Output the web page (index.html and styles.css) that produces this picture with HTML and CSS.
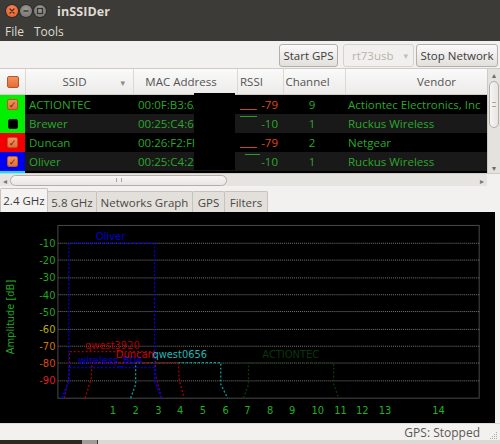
FILE: index.html
```html
<!DOCTYPE html>
<html>
<head>
<meta charset="utf-8">
<title>inSSIDer</title>
<link rel="stylesheet" href="styles.css">
</head>
<body>
<div class="window">
  <div class="titlebar">
    <div class="wbtns">
      <span class="wb close"><svg width="12" height="12" viewBox="0 0 12 12"><path d="M4 4 L8 8 M8 4 L4 8" stroke="#5a2410" stroke-width="1.4" stroke-linecap="round"/></svg></span>
      <span class="wb"><svg width="12" height="12" viewBox="0 0 12 12"><path d="M3.5 6 H8.5" stroke="#33322e" stroke-width="1.4"/></svg></span>
      <span class="wb"><svg width="12" height="12" viewBox="0 0 12 12"><rect x="3.5" y="3.5" width="5" height="5" fill="none" stroke="#33322e" stroke-width="1.2"/></svg></span>
    </div>
    <span class="title">inSSIDer</span>
  </div>
  <div class="menubar"><span>File</span><span>Tools</span></div>
  <div class="toolbar">
    <div class="btn w-gps">Start GPS</div>
    <div class="combo">rt73usb <span class="carrow">▾</span></div>
    <div class="btn w-stop">Stop Network</div>
  </div>
  <div class="tablearea">
    <div class="table">
      <div class="row head">
        <div class="c chk"><span class="cb orange"></span></div>
        <div class="c ssid hc">SSID <span class="sort">▾</span></div>
        <div class="c mac hc">MAC Address</div>
        <div class="c rssi hc">RSSI</div>
        <div class="c chan hc">Channel</div>
        <div class="c vend hc">Vendor</div>
      </div>
      <div class="row r-dark">
        <div class="c chk green"><span class="cb orange checked">✓</span></div>
        <div class="c ssid">ACTIONTEC</div>
        <div class="c mac">00:0F:B3:6A</div>
        <div class="c rssi bad spark-low">-79</div>
        <div class="c chan">9</div>
        <div class="c vend">Actiontec Electronics, Inc</div>
      </div>
      <div class="row r-grey">
        <div class="c chk green"><span class="cb black"></span></div>
        <div class="c ssid">Brewer</div>
        <div class="c mac">00:25:C4:6</div>
        <div class="c rssi spark-high">-10</div>
        <div class="c chan">1</div>
        <div class="c vend">Ruckus Wireless</div>
      </div>
      <div class="row r-dark">
        <div class="c chk red"><span class="cb orange checked">✓</span></div>
        <div class="c ssid">Duncan</div>
        <div class="c mac">00:26:F2:FE</div>
        <div class="c rssi bad spark-low">-79</div>
        <div class="c chan">2</div>
        <div class="c vend">Netgear</div>
      </div>
      <div class="row r-grey">
        <div class="c chk blue"><span class="cb orange checked">✓</span></div>
        <div class="c ssid">Oliver</div>
        <div class="c mac">00:25:C4:2</div>
        <div class="c rssi spark-high2">-10</div>
        <div class="c chan">1</div>
        <div class="c vend">Ruckus Wireless</div>
      </div>
      <div class="row r-part">
        <div class="c chk cyan"></div>
        <div class="c ssid"></div>
        <div class="c mac"></div>
        <div class="c rssi"></div>
        <div class="c chan"></div>
        <div class="c vend"></div>
      </div>
      <div class="redact"></div>
    </div>
    <div class="vscroll">
      <span class="sarrow">▴</span>
      <div class="vslider"><span class="vgrip"></span></div>
      <div class="vspace"></div>
      <span class="sarrow">▾</span>
    </div>
  </div>
  <div class="hscroll">
    <span class="harrow">◂</span>
    <div class="hslider"><span class="hgrip"></span></div>
    <div class="hspace"></div>
    <span class="harrow">▸</span>
    <div class="corner"></div>
  </div>
  <div class="tabs">
    <div class="tab active t1">2.4 GHz</div>
    <div class="tab t2">5.8 GHz</div>
    <div class="tab t3">Networks Graph</div>
    <div class="tab t4">GPS</div>
    <div class="tab t5">Filters</div>
  </div>
  <div class="graph">
    <svg class="plot" width="500" height="211" viewBox="0 212 500 211">
      <rect x="58.5" y="224.5" width="425.5" height="174.5" fill="none" stroke="#4a4a4a" stroke-width="1"/>
      <g class="grid" stroke="#7a7a7a" stroke-width="1" stroke-dasharray="1 1">
        <line x1="59" y1="242.5" x2="484" y2="242.5"/>
        <line x1="59" y1="259.5" x2="484" y2="259.5"/>
        <line x1="59" y1="277.5" x2="484" y2="277.5"/>
        <line x1="59" y1="294.5" x2="484" y2="294.5"/>
        <line x1="59" y1="311.5" x2="484" y2="311.5"/>
        <line x1="59" y1="329.5" x2="484" y2="329.5"/>
        <line x1="59" y1="346.5" x2="484" y2="346.5"/>
        <line x1="59" y1="363.5" x2="484" y2="363.5"/>
        <line x1="59" y1="381.5" x2="484" y2="381.5"/>
      </g>
      <g class="ylab" text-anchor="end">
        <text x="56" y="246.5" fill="#22a822">-10</text>
        <text x="56" y="263.8" fill="#22a822">-20</text>
        <text x="56" y="281.1" fill="#22a822">-30</text>
        <text x="56" y="298.4" fill="#22a822">-40</text>
        <text x="56" y="315.7" fill="#22a822">-50</text>
        <text x="56" y="333" fill="#b8b000">-60</text>
        <text x="56" y="350.3" fill="#cc7800">-70</text>
        <text x="56" y="367.6" fill="#dd4a10">-80</text>
        <text x="56" y="384.9" fill="#dd2020">-90</text>
      </g>
      <text class="axis" transform="translate(14.5 317) rotate(-90)" text-anchor="middle" fill="#22a822">Amplitude [dB]</text>
      <g class="xlab" text-anchor="middle" fill="#22b022">
        <text x="114" y="415">1</text>
        <text x="137" y="415">2</text>
        <text x="160" y="415">3</text>
        <text x="182" y="415">4</text>
        <text x="205" y="415">5</text>
        <text x="228" y="415">6</text>
        <text x="250" y="415">7</text>
        <text x="273" y="415">8</text>
        <text x="295" y="415">9</text>
        <text x="321" y="415">10</text>
        <text x="344" y="415">11</text>
        <text x="366" y="415">12</text>
        <text x="389" y="415">13</text>
        <text x="443" y="415">14</text>
      </g>
      <g fill="none" stroke-width="1.3" stroke-dasharray="2 2">
        <polyline stroke="#0b3a0b" points="246,399 251,385 251,363 337,363 337,385 342,399"/>
        <polyline stroke="#00a0a0" points="132,399 137,385 137,363 223,363 223,385 230,399"/>
        <polyline stroke="#b00000" points="86,399 92,380 93,363 180,363 181,380 186,399"/>
        <polyline stroke="#a00000" points="65,399 70,375 70,352 157,352 157,375 163,399"/>
        <polyline stroke="#0000c8" points="64,399 70,380 70,368 157,368 157,380 163,399"/>
        <polyline stroke="#0000d8" points="62,399 69.5,382 69.5,242.5 156,242.5 156,382 163,399"/>
      </g>
      <g class="nlab">
        <text x="97" y="239" fill="#0000d0">Oliver</text>
        <text x="86" y="349" fill="#b00000">qwest3920</text>
        <text x="265" y="358" fill="#0a360a">ACTIONTEC</text>
        <text x="79" y="364" fill="#0000d8">wireless_B04</text>
        <text x="117" y="358" fill="#d00000">Duncan</text>
        <text x="154" y="358" fill="#22b8b8">qwest0656</text>
      </g>
    </svg>
  </div>
  <div class="status">
    <span class="gps">GPS: Stopped</span>
    <svg class="grip" width="10" height="10" viewBox="0 0 10 10">
      <g fill="#b0aca6"><rect x="8" y="2" width="1" height="1"/><rect x="6" y="4" width="1" height="1"/><rect x="8" y="4" width="1" height="1"/><rect x="4" y="6" width="1" height="1"/><rect x="6" y="6" width="1" height="1"/><rect x="8" y="6" width="1" height="1"/><rect x="2" y="8" width="1" height="1"/><rect x="4" y="8" width="1" height="1"/><rect x="6" y="8" width="1" height="1"/><rect x="8" y="8" width="1" height="1"/></g>
    </svg>
  </div>
  <div class="desktop"><span class="d1"></span><span class="d2"></span><span class="d3"></span></div>
</div>
</body>
</html>
```
FILE: styles.css
```css
* { box-sizing: border-box; }
html, body { margin: 0; padding: 0; background: #3c3b37; }
body { width: 500px; height: 444px; overflow: hidden; font-family: "Open Sans", "Noto Sans", "DejaVu Sans", sans-serif; font-size: 11.5px; }
.window { width: 500px; height: 444px; display: flex; flex-direction: column; background: #f2f1f0; }

.titlebar { height: 22px; background: #3c3b37; display: flex; align-items: center; padding-left: 6px; }
.wbtns { display: flex; gap: 2px; width: 51px; }
.wb { width: 12px; height: 12px; border-radius: 50%; background: radial-gradient(circle at 50% 35%, #9c9a94, #6f6d67); display: flex; align-items: center; justify-content: center; box-shadow: 0 0 0 1px #2e2d2a; }
.wb.close { background: radial-gradient(circle at 50% 35%, #f58a5a, #df5a22); }
.title { color: #dfdbd2; font-weight: bold; font-size: 12.5px; letter-spacing: 0.1px; }

.menubar { height: 19px; background: #3c3b37; display: flex; align-items: center; gap: 10px; padding-left: 5px; color: #dfdbd2; font-size: 12px; padding-bottom: 1px; }

.toolbar { height: 27px; display: flex; justify-content: flex-end; align-items: center; padding-right: 2px; padding-top: 2px; background: #f2f1f0; }
.btn, .combo { height: 23px; border-radius: 3px; display: flex; align-items: center; justify-content: center; color: #3c3c3c; }
.btn { border: 1px solid #b4afa8; background: linear-gradient(#fbfafa, #e2e0dc); }
.w-gps { width: 59px; margin-right: 5px; }
.w-stop { width: 82px; margin-left: 2px; }
.combo { width: 71px; border: 1px solid #d6d2cc; background: #f1f0ee; color: #b7b3ab; justify-content: flex-start; padding-left: 8px; }
.carrow { margin-left: 10px; font-size: 9px; color: #c2beb7; }

.tablearea { height: 105px; display: flex; border-top: 1px solid #cfcbc5; }
.table { position: relative; width: 487px; overflow: hidden; background: #000; }
.row { display: grid; grid-template-columns: 25px 108px 104px 46px 62px 142px; height: 19px; color: #2aa82a; }
.row.head { height: 26px; background: linear-gradient(#fafafa, #ecebea); color: #555350; border-bottom: 1px solid #d0ccc6; }
.row.r-dark { background: #000; }
.row.r-grey { background: #191919; }
.row.r-part { height: 2px; background: #000; }
.c { display: flex; align-items: center; white-space: nowrap; overflow: hidden; }
.hc { justify-content: center; border-left: 1px solid #dcd9d4; }
.row.head .chk { justify-content: center; }
.row.head .ssid { position: relative; padding-right: 14px; }
.sort { position: absolute; right: 8px; top: 7px; color: #8c8984; font-size: 9px; }
.row.head .mac { padding-right: 14px; }
.row.head .rssi { justify-content: flex-start; padding-left: 2px; padding-right: 0; }
.row.head .chan { padding-right: 14px; }
.row.head .vend { padding-left: 40px; }
.chk { justify-content: center; }
.chk.green { background: #00f000; }
.chk.red { background: #f00000; }
.chk.blue { background: #0000f0; }
.chk.cyan { background: #00e8e8; }
.cb { width: 11px; height: 11px; border-radius: 2px; display: flex; align-items: center; justify-content: center; font-size: 9px; line-height: 1; }
.cb.orange { background: linear-gradient(#f29262, #e46e36); border: 1px solid #b8552a; color: #5a2a14; }
.head .cb { width: 12px; height: 12px; }
.cb.black { background: #000; border: 1px solid #1a1a1a; width: 10px; height: 10px; }
.row .ssid { padding-left: 4px; }
.row .mac { padding-left: 5px; }
.row .rssi { justify-content: flex-end; padding-right: 5px; }
.row .rssi.bad { color: #e4461a; }
.row .chan { justify-content: center; padding-right: 4px; }
.row .vend { padding-left: 3px; }
.spark-low { background: linear-gradient(#c8461a, #c8461a) no-repeat 3px 14px / 17px 1px; }
.spark-high { background: linear-gradient(#2a9a2a, #2a9a2a) no-repeat 3px 2px / 17px 1px; }
.spark-high2 { background: linear-gradient(#2a9a2a, #2a9a2a) no-repeat 8px 2px / 15px 1px; }
.redact { position: absolute; left: 194px; top: 24px; width: 41px; height: 77px; background: #000; }

.vscroll { width: 13px; display: flex; flex-direction: column; align-items: center; background: #e4e2de; border-left: 1px solid #cdc9c3; }
.sarrow { font-size: 8px; color: #6e6b66; height: 11px; line-height: 11px; }
.vslider { width: 10px; height: 47px; margin-top: 1px; border: 1px solid #b3aea7; border-radius: 5px; background: linear-gradient(90deg, #f6f5f4, #e6e4e1); display: flex; align-items: center; justify-content: center; }
.vgrip { width: 4px; height: 5px; border-top: 1px solid #aaa6a0; border-bottom: 1px solid #aaa6a0; }
.vspace { flex: 1; }

.hscroll { height: 13px; display: flex; align-items: center; background: #e6e4e1; border-top: 1px solid #cfcbc5; }
.harrow { width: 10px; font-size: 8px; color: #777; text-align: center; }
.hslider { width: 217px; height: 11px; border: 1px solid #b3aea7; border-radius: 6px; background: linear-gradient(#f7f6f5, #e8e6e3); display: flex; align-items: center; justify-content: center; }
.hgrip { width: 6px; height: 4px; border-left: 1px solid #aaa6a0; border-right: 1px solid #aaa6a0; }
.hspace { flex: 1; }
.corner { width: 13px; height: 13px; background: #f2f1f0; }

.tabs { height: 26px; display: flex; align-items: flex-end; background: #f2f1f0; }
.tab { height: 21px; display: flex; align-items: center; justify-content: center; color: #4a4844; background: #e3e0dc; border: 1px solid #c7c3bc; border-bottom: none; margin-left: -1px; border-radius: 2px 2px 0 0; }
.tab.active { height: 24px; background: #f4f3f2; color: #3c3b37; margin-left: 0; position: relative; z-index: 1; }
.t1 { width: 48px; }
.t2 { width: 50px; }
.t3 { width: 97px; }
.t4 { width: 33px; }
.t5 { width: 44px; }

.graph { height: 211px; display: flex; background: #f2f1f0; }
.plot { display: block; width: 495px; background: #000; font-family: "DejaVu Sans", sans-serif; font-size: 10px; }
.axis { font-size: 10px; }

.status { height: 17px; display: flex; align-items: center; justify-content: flex-end; color: #5a5854; font-size: 12px; background: #f2f1f0; border-top: 1px solid #dedbd6; }
.gps { margin-right: 8px; }
.grip { margin-right: 2px; align-self: flex-end; }

.desktop { height: 4px; display: flex; background: #dcd9d4; }
.d1 { width: 82px; background: #2b2a1e; }
.d2 { width: 15px; background: #a09d98; }
.d3 { width: 1px; background: #3a3a3a; }
```
